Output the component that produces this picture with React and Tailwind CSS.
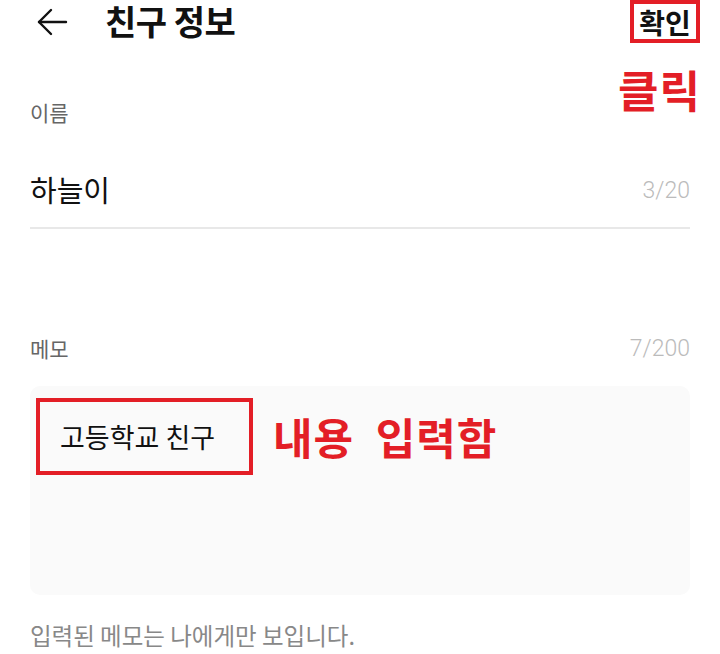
const font = { fontFamily: '"Noto Sans CJK KR", "Noto Sans", sans-serif' };
const numFont = { fontFamily: 'Roboto, "Noto Sans", sans-serif' };

function BackArrow() {
  return (
    <svg width="32" height="30" viewBox="0 0 32 30" fill="none" stroke="#111" strokeWidth="2.4" strokeLinecap="round" strokeLinejoin="round">
      <path d="M30 15H3" />
      <path d="M15 3L3 15l12 12" />
    </svg>
  );
}

export default function App() {
  return (
    <div className="h-[654px] w-[720px] overflow-hidden bg-white text-[#111]" style={font}>
      <header className="flex h-[43px] items-center justify-between pl-[36px] pr-[20px]">
        <div className="flex items-center gap-[37px]">
          <BackArrow />
          <h1 className="text-[34px] font-bold leading-tight tracking-[-0.5px]">친구 정보</h1>
        </div>
        <span className="flex h-[43px] w-[70px] items-center justify-center border-[4px] border-[#e31e26] text-[28px] font-bold leading-none">확인</span>
      </header>

      <div className="flex justify-end pr-[19px] pt-[24px]">
        <span className="text-[44px] font-bold leading-none tracking-[1px] text-[#e31e26]">클릭</span>
      </div>

      <main className="pl-[30px] pr-[30px]">
        <p className="-mt-[9px] text-[21px] leading-none text-[#666]">이름</p>

        <div className="mt-[52px] flex items-end justify-between border-b-2 border-[#e8e8e8] pb-[23px]">
          <span className="text-[29px] leading-none">하늘이</span>
          <span className="pb-[2px] text-[23px] font-light leading-none text-[#bbb]" style={numFont}>3/20</span>
        </div>

        <div className="mt-[108px] flex items-center justify-between">
          <span className="text-[21px] leading-none text-[#666]">메모</span>
          <span className="text-[23px] font-light leading-none text-[#bbb]" style={numFont}>7/200</span>
        </div>

        <div className="mt-[26px] h-[209px] rounded-[10px] bg-[#fafafa] pl-[6px] pt-[12px]">
          <div className="flex items-center gap-[20px]">
            <div className="flex h-[77px] w-[217px] items-center border-[4px] border-[#e31e26] pl-[20px]">
              <span className="text-[27px] leading-none">고등학교 친구</span>
            </div>
            <span className="text-[43px] font-bold leading-none tracking-[1px] text-[#e31e26]">내용&nbsp; 입력함</span>
          </div>
        </div>

        <p className="mt-[29px] text-[23.5px] leading-none text-[#888]">입력된 메모는 나에게만 보입니다.</p>
      </main>
    </div>
  );
}
